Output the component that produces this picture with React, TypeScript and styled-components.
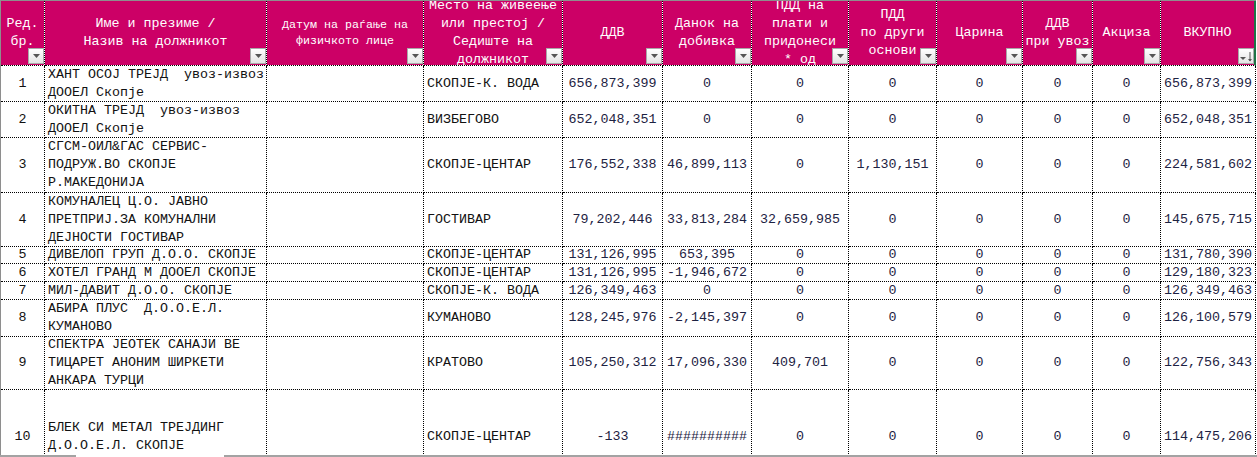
import React from "react";
import styled, { createGlobalStyle } from "styled-components";

const GlobalStyle = createGlobalStyle`
  html, body { margin: 0; padding: 0; background: #ffffff; }
  body { font-family: "Liberation Mono", "Courier New", monospace; }
`;

const COLS = [44, 222, 157, 139, 100, 89, 97, 88, 86, 70, 68, 95];
const TEMPLATE = COLS.map((w) => `${w}px`).join(" ");

const Page = styled.div`
  width: 1257px;
  height: 457px;
  overflow: hidden;
  background: #ffffff;
`;

const Sheet = styled.div`
  width: 1256px;
  height: 455px;
  box-sizing: border-box;
  overflow: hidden;
  border-top: 1px solid #8e8e8e;
  border-left: 1px solid #8e8e8e;
`;

const HeaderRow = styled.div`
  display: grid;
  grid-template-columns: ${TEMPLATE};
  height: 65px;
  background: #ffffff;
`;

const HeadCell = styled.div<{ $last?: boolean }>`
  position: relative;
  box-sizing: border-box;
  height: 65px;
  background: #cc0066;
  background-clip: padding-box;
  border-right: ${(p) => (p.$last ? "2px solid #1f7346" : "1px dotted #000")};
  border-bottom: 1px dotted #000;
  display: flex;
  align-items: center;
  justify-content: center;
  overflow: hidden;
  color: #ffffff;
  text-align: center;
`;

const HeadLabel = styled.div<{ $small?: boolean }>`
  font-family: "Liberation Mono", "Courier New", monospace;
  font-size: ${(p) => (p.$small ? "11.67px" : "13.33px")};
  line-height: ${(p) => (p.$small ? "16px" : "18px")};
  white-space: pre;
`;

const FilterButton = styled.div`
  position: absolute;
  right: 0;
  bottom: 1px;
  width: 16px;
  height: 16px;
  box-sizing: border-box;
  border: 1px solid #a9a9a9;
  background: linear-gradient(#ffffff, #e4e4e4);
  display: flex;
  align-items: center;
  justify-content: center;
`;

const Row = styled.div<{ $h: number }>`
  display: grid;
  grid-template-columns: ${TEMPLATE};
  height: ${(p) => p.$h}px;
`;

const Cell = styled.div<{ $align: "left" | "center"; $num?: boolean }>`
  box-sizing: border-box;
  border-right: 1px dotted #000;
  border-bottom: 1px dotted #000;
  display: flex;
  flex-direction: column;
  justify-content: center;
  align-items: ${(p) => (p.$align === "left" ? "flex-start" : "center")};
  padding-left: ${(p) => (p.$align === "left" ? "3px" : "0")};
  overflow: hidden;
  font-family: "Liberation Mono", "Courier New", monospace;
  font-size: 13.33px;
  line-height: 18px;
  white-space: pre;
  color: ${(p) => (p.$num ? "#1d2242" : "#111111")};
`;

const BottomEdge = styled.div`
  height: 2px;
  background: #a3a3a3;
  display: flex;
`;

const EdgeGap = styled.div`
  margin-left: 76px;
  width: 148px;
  height: 2px;
  background: #ffffff;
`;

const Tri = () => (
  <svg width="7" height="4" viewBox="0 0 7 4">
    <polygon points="0,0 7,0 3.5,4" fill="#555555" />
  </svg>
);

const SortTri = () => (
  <svg width="13" height="11" viewBox="0 0 13 11">
    <polygon points="0,6 6,6 3,9" fill="#555555" />
    <line x1="10" y1="1" x2="10" y2="10" stroke="#555555" strokeWidth="1" />
    <polygon points="8,8 12,8 10,10.5" fill="#555555" />
  </svg>
);

type Head = { lines: string[]; small?: boolean; sort?: boolean };

const HEADS: Head[] = [
  { lines: ["Ред.", "бр."] },
  { lines: ["Име и презиме /", "Назив на должникот"] },
  { lines: ["Датум на раѓање на", "физичкото лице"], small: true },
  { lines: ["Место на живеење", "или престој /", "Седиште на", "должникот"] },
  { lines: ["ДДВ"] },
  { lines: ["Данок на", "добивка"] },
  { lines: ["ПДД на", "плати и", "придонеси", "* од"] },
  { lines: ["ПДД", "по други", "основи"] },
  { lines: ["Царина"] },
  { lines: ["ДДВ", "при увоз"] },
  { lines: ["Акциза"] },
  { lines: ["ВКУПНО"], sort: true },
];

type Rec = {
  h: number;
  name: string[];
  place: string;
  nums: string[];
};

const ROWS: Rec[] = [
  { h: 36, name: ["ХАНТ ОСОЈ ТРЕЈД  увоз-извоз", "ДООЕЛ Скопје"], place: "СКОПЈЕ-К. ВОДА", nums: ["656,873,399", "0", "0", "0", "0", "0", "0", "656,873,399"] },
  { h: 36, name: ["ОКИТНА ТРЕЈД  увоз-извоз", "ДООЕЛ Скопје"], place: "ВИЗБЕГОВО", nums: ["652,048,351", "0", "0", "0", "0", "0", "0", "652,048,351"] },
  { h: 55, name: ["СГСМ-ОИЛ&ГАС СЕРВИС-", "ПОДРУЖ.ВО СКОПЈЕ", "Р.МАКЕДОНИЈА"], place: "СКОПЈЕ-ЦЕНТАР", nums: ["176,552,338", "46,899,113", "0", "1,130,151", "0", "0", "0", "224,581,602"] },
  { h: 54, name: ["КОМУНАЛЕЦ Ц.О. ЈАВНО", "ПРЕТПРИЈ.ЗА КОМУНАЛНИ", "ДЕЈНОСТИ ГОСТИВАР"], place: "ГОСТИВАР", nums: ["79,202,446", "33,813,284", "32,659,985", "0", "0", "0", "0", "145,675,715"] },
  { h: 17, name: ["ДИВЕЛОП ГРУП Д.О.О. СКОПЈЕ"], place: "СКОПЈЕ-ЦЕНТАР", nums: ["131,126,995", "653,395", "0", "0", "0", "0", "0", "131,780,390"] },
  { h: 18, name: ["ХОТЕЛ ГРАНД М ДООЕЛ СКОПЈЕ"], place: "СКОПЈЕ-ЦЕНТАР", nums: ["131,126,995", "-1,946,672", "0", "0", "0", "0", "0", "129,180,323"] },
  { h: 18, name: ["МИЛ-ДАВИТ Д.О.О. СКОПЈЕ"], place: "СКОПЈЕ-К. ВОДА", nums: ["126,349,463", "0", "0", "0", "0", "0", "0", "126,349,463"] },
  { h: 37, name: ["АБИРА ПЛУС  Д.О.О.Е.Л.", "КУМАНОВО"], place: "КУМАНОВО", nums: ["128,245,976", "-2,145,397", "0", "0", "0", "0", "0", "126,100,579"] },
  { h: 53, name: ["СПЕКТРА ЈЕОТЕК САНАЈИ ВЕ", "ТИЦАРЕТ АНОНИМ ШИРКЕТИ", "АНКАРА ТУРЦИ"], place: "КРАТОВО", nums: ["105,250,312", "17,096,330", "409,701", "0", "0", "0", "0", "122,756,343"] },
  { h: 94, name: ["БЛЕК СИ МЕТАЛ ТРЕЈДИНГ", "Д.О.О.Е.Л. СКОПЈЕ"], place: "СКОПЈЕ-ЦЕНТАР", nums: ["-133", "##########", "0", "0", "0", "0", "0", "114,475,206"] },
];

export default function App() {
  return (
    <Page>
      <GlobalStyle />
      <Sheet>
        <HeaderRow>
          {HEADS.map((h, i) => (
            <HeadCell key={i} $last={i === HEADS.length - 1}>
              <HeadLabel $small={h.small}>{h.lines.join("\n")}</HeadLabel>
              <FilterButton>{h.sort ? <SortTri /> : <Tri />}</FilterButton>
            </HeadCell>
          ))}
        </HeaderRow>
        {ROWS.map((r, i) => (
          <Row key={i} $h={r.h}>
            <Cell $align="center">{String(i + 1)}</Cell>
            <Cell $align="left">
              {r.name.map((l, j) => (
                <span key={j}>{l}</span>
              ))}
            </Cell>
            <Cell $align="left" />
            <Cell $align="left">{r.place}</Cell>
            {r.nums.map((n, j) => (
              <Cell key={j} $align="center" $num>
                {n}
              </Cell>
            ))}
          </Row>
        ))}
      </Sheet>
      <BottomEdge>
        <EdgeGap />
      </BottomEdge>
    </Page>
  );
}
